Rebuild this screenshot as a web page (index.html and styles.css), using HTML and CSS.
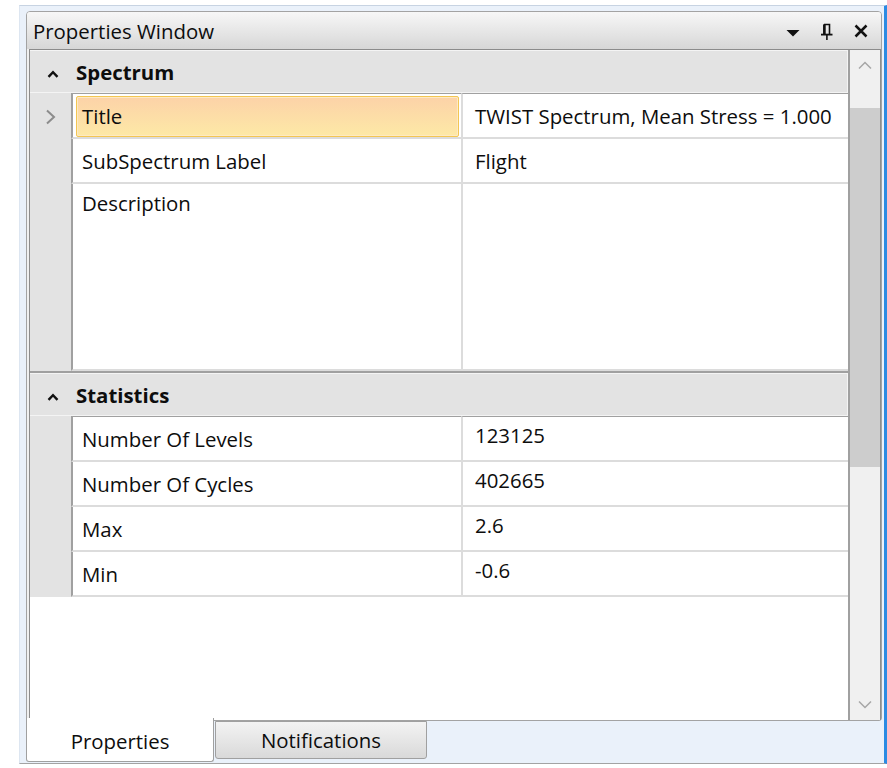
FILE: index.html
```html
<!DOCTYPE html>
<html lang="en">
<head>
<meta charset="utf-8">
<title>Properties Window</title>
<link rel="stylesheet" href="styles.css">
</head>
<body>
<div class="frame">
  <div class="pane">
    <div class="titlebar">
      <span class="title">Properties Window</span>
      <div class="tools">
        <svg class="tool" width="20" height="20" viewBox="0 0 20 20" aria-label="Window position">
          <polygon points="3.5,9 16.5,9 10,15.5" fill="#111"/>
        </svg>
        <svg class="tool" width="20" height="20" viewBox="0 0 20 20" aria-label="Auto hide">
          <path d="M7 3.5 H12.5 V13.5 M7.2 3.5 V13.5" fill="none" stroke="#111" stroke-width="1.6"/>
          <path d="M7.4 3.5 V13.5" stroke="#111" stroke-width="2.6"/>
          <path d="M4 13.6 H15.5" stroke="#111" stroke-width="1.8"/>
          <path d="M9.9 13.6 V19" stroke="#111" stroke-width="1.6"/>
        </svg>
        <svg class="tool" width="20" height="20" viewBox="0 0 20 20" aria-label="Close">
          <path d="M4.5 4.5 L15.5 15.5 M15.5 4.5 L4.5 15.5" stroke="#111" stroke-width="2.5"/>
        </svg>
      </div>
    </div>
    <div class="content">
      <div class="grid">
        <section class="category">
          <div class="cat-head">
            <span class="caret"><svg width="12" height="8" viewBox="0 0 12 8"><polyline points="1.5,6.8 6,2.2 10.5,6.8" fill="none" stroke="#111" stroke-width="2.4"/></svg></span>
            <span class="cat-name">Spectrum</span>
          </div>
          <div class="row">
            <div class="mark"><svg width="12" height="16" viewBox="0 0 12 16"><polyline points="2,1.5 9,8 2,14.5" fill="none" stroke="#8c8c8c" stroke-width="2"/></svg></div>
            <div class="name"><div class="label selected">Title</div></div>
            <div class="value">TWIST Spectrum, Mean Stress = 1.000</div>
          </div>
          <div class="row">
            <div class="mark"></div>
            <div class="name"><div class="label">SubSpectrum Label</div></div>
            <div class="value">Flight</div>
          </div>
          <div class="row tall">
            <div class="mark"></div>
            <div class="name"><div class="label top">Description</div></div>
            <div class="value"></div>
          </div>
        </section>
        <section class="category">
          <div class="cat-head">
            <span class="caret"><svg width="12" height="8" viewBox="0 0 12 8"><polyline points="1.5,6.8 6,2.2 10.5,6.8" fill="none" stroke="#111" stroke-width="2.4"/></svg></span>
            <span class="cat-name">Statistics</span>
          </div>
          <div class="row">
            <div class="mark"></div>
            <div class="name"><div class="label">Number Of Levels</div></div>
            <div class="value numeric">123125</div>
          </div>
          <div class="row">
            <div class="mark"></div>
            <div class="name"><div class="label">Number Of Cycles</div></div>
            <div class="value numeric">402665</div>
          </div>
          <div class="row">
            <div class="mark"></div>
            <div class="name"><div class="label">Max</div></div>
            <div class="value numeric">2.6</div>
          </div>
          <div class="row">
            <div class="mark"></div>
            <div class="name"><div class="label">Min</div></div>
            <div class="value numeric">-0.6</div>
          </div>
        </section>
      </div>
      <div class="scrollbar">
        <div class="sb-btn up"><svg width="14" height="9" viewBox="0 0 14 9"><polyline points="1,7.5 7,1.5 13,7.5" fill="none" stroke="#a6a6a6" stroke-width="1.5"/></svg></div>
        <div class="sb-track"><div class="sb-thumb"></div></div>
        <div class="sb-btn down"><svg width="14" height="9" viewBox="0 0 14 9"><polyline points="1,1.5 7,7.5 13,1.5" fill="none" stroke="#a6a6a6" stroke-width="1.5"/></svg></div>
      </div>
    </div>
  </div>
  <div class="tabs">
    <div class="tab active">Properties</div>
    <div class="tab">Notifications</div>
  </div>
</div>
</body>
</html>
```
FILE: styles.css
```css
* {
  box-sizing: border-box;
}

html,
body {
  margin: 0;
  background: #ffffff;
}

body {
  font-family: "Open Sans", "Noto Sans", sans-serif;
  font-size: 20.4px;
  color: #0d0d0d;
}

/* host window around the tool pane */
.frame {
  margin: 5px 0 0 19px;
  width: 868px;
  height: 759px;
  background: #eaf1fa;
  border-top: 1px solid #c7d3e2;
  border-left: 1px solid #dde6f1;
  border-right: 3px solid #2b8be3;
  border-bottom: 1px solid #a3a3a3;
  padding: 5px 2px 0 6px;
  display: flex;
  flex-direction: column;
}

.pane {
  height: 710px;
  flex: none;
  border: 1px solid #a3a3a3;
  border-radius: 4px 4px 3px 3px;
  background: #f0f0f0;
  display: flex;
  flex-direction: column;
}

/* caption */
.titlebar {
  height: 37px;
  flex: none;
  display: flex;
  align-items: center;
  padding: 0 10px 0 6px;
  background: linear-gradient(#f7f7f7, #d7d7d7);
  border-radius: 3px 3px 0 0;
}

.title {
  flex: 1;
  line-height: 26px;
}

.tools {
  display: flex;
  align-items: center;
  gap: 14px;
}

.tool {
  display: block;
}

/* property grid */
.content {
  flex: 1;
  margin-left: 2px;
  border: 1px solid #8c8c8c;
  border-bottom: none;
  background: #ffffff;
  display: flex;
  min-height: 0;
}

.grid {
  flex: 1;
  border-right: 2px solid #a0a0a0;
  background: #ffffff;
}

.category + .category {
  border-top: 2px solid #a0a0a0;
}

.cat-head {
  height: 43px;
  display: flex;
  align-items: center;
  background: #e3e3e3;
  box-shadow: inset 0 1px 0 #f4f4f4, inset -1px -1px 0 #f4f4f4;
}

.caret {
  width: 46px;
  display: flex;
  justify-content: center;
  padding-top: 5px;
}

.caret svg {
  display: block;
}

.cat-name {
  font-weight: 700;
  line-height: 26px;
}

.row {
  display: grid;
  grid-template-columns: 41px 390px 1fr;
  height: 45px;
}

.cat-head + .row {
  height: 46px;
}

.row.tall {
  height: 187px;
}

.mark {
  background: #e3e3e3;
  display: flex;
  justify-content: center;
  align-items: center;
  padding-top: 2px;
}

.name {
  border-left: 2px solid #a0a0a0;
  border-bottom: 2px solid #dcdcdc;
  padding: 2px 2px 0 3px;
}

.value {
  border-left: 2px solid #dcdcdc;
  border-bottom: 2px solid #dcdcdc;
  padding: 9px 0 0 12px;
  line-height: 26px;
  white-space: nowrap;
}

.value.numeric {
  padding-top: 5px;
}

.cat-head + .row .name,
.cat-head + .row .value {
  border-top: 1px solid #a0a0a0;
}

.label {
  height: 100%;
  border: 1px solid transparent;
  border-radius: 2px;
  padding: 6px 5px 0;
  line-height: 26px;
  white-space: nowrap;
}

.label.top {
  padding-top: 3px;
}

.label.selected {
  background: linear-gradient(#fcd2a8, #fde9a6);
  border-color: #f3c652;
  box-shadow: inset 0 0 0 1px #fde9c4;
}

/* vertical scroll bar */
.scrollbar {
  width: 30px;
  flex: none;
  background: #f0f0f0;
  display: flex;
  flex-direction: column;
}

.sb-btn {
  flex: none;
  display: flex;
  justify-content: center;
  align-items: center;
}

.sb-btn svg {
  display: block;
}

.sb-btn.up {
  height: 35px;
  padding-bottom: 4px;
}

.sb-btn.down {
  height: 32px;
}

.sb-track {
  flex: 1;
  padding-top: 23px;
}

.sb-thumb {
  height: 359px;
  background: #cdcdcd;
}

/* document tabs */
.tabs {
  display: flex;
  align-items: flex-start;
  margin-top: -3px;
}

.tab {
  display: flex;
  justify-content: center;
  align-items: center;
  border: 1px solid #a0a0a0;
  border-radius: 0 0 3px 3px;
  line-height: 26px;
}

.tab.active {
  width: 188px;
  height: 44px;
  border-top: none;
  background: #ffffff;
  padding-top: 3px;
}

.tab:not(.active) {
  width: 212px;
  height: 38px;
  margin: 3px 0 0 1px;
  background: linear-gradient(#f3f3f3, #d9d9d9);
  padding-top: 0;
}
```
